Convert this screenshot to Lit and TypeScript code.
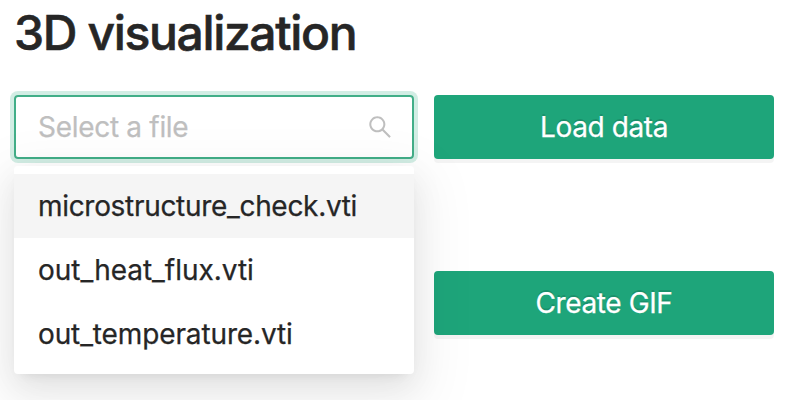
import { LitElement, html, css } from "lit";
import { customElement, state } from "lit/decorators.js";
import { styleMap } from "lit/directives/style-map.js";

interface FileOption {
  name: string;
  tracking: number;
}

@customElement("app-root")
export class AppRoot extends LitElement {
  @state() private files: FileOption[] = [
    { name: "microstructure_check.vti", tracking: -0.31 },
    { name: "out_heat_flux.vti", tracking: -0.02 },
    { name: "out_temperature.vti", tracking: -0.12 },
  ];
  @state() private active = 0;

  static styles = css`
    :host {
      display: block;
      box-sizing: border-box;
      height: 400px;
      padding: 0 14px;
      overflow: hidden;
      background: #fff;
      color: #262626;
      font-family: Inter, "Liberation Sans", sans-serif;
      font-size: 28px;
      line-height: 44px;
      -webkit-text-stroke: 0.25px currentColor;
    }
    * { box-sizing: border-box; }
    h1 {
      margin: 0;
      height: 95px;
      padding-top: 7px;
      font-size: 48px;
      line-height: 52px;
      font-weight: 500;
      letter-spacing: -1.35px;
      white-space: nowrap;
      -webkit-text-stroke-width: 0.6px;
    }
    .grid {
      display: grid;
      grid-template-columns: 400px 340px;
      column-gap: 20px;
      align-items: start;
    }
    .picker { position: relative; }
    .select {
      display: flex;
      align-items: center;
      justify-content: space-between;
      height: 64px;
      padding: 0 20px 0 22px;
      border: 2px solid #42ae88;
      border-radius: 4px;
      box-shadow: 0 0 0 4px rgba(30, 165, 120, 0.2);
    }
    .placeholder { color: #bfbfbf; letter-spacing: -0.3px; -webkit-text-stroke-color: #bfbfbf; }
    .search { display: block; width: 24px; height: 24px; fill: #bfbfbf; }
    .menu {
      position: absolute;
      top: 71px;
      left: 0;
      width: 400px;
      padding: 8px 0;
      border-radius: 4px;
      background: #fff;
      box-shadow: 0 6px 12px -8px rgba(0, 0, 0, 0.12), 0 12px 32px 0 rgba(0, 0, 0, 0.08),
        0 18px 56px 16px rgba(0, 0, 0, 0.05);
    }
    .option { height: 64px; padding: 10px 24px; white-space: nowrap; }
    .option.active { background: #f5f5f5; }
    .actions { display: flex; flex-direction: column; gap: 112px; }
    button {
      height: 64px;
      padding: 0;
      border: 0;
      border-radius: 4px;
      background: #1ea57a;
      color: #fff;
      font: inherit;
      -webkit-text-stroke-color: #fff;
      text-shadow: 0 -2px 0 rgba(0, 0, 0, 0.12);
      box-shadow: 0 4px 0 rgba(0, 0, 0, 0.045);
    }
    .load { letter-spacing: -0.4px; }
    .gif { letter-spacing: -0.4px; }
  `;

  render() {
    return html`
      <h1><span>3D visualization</span></h1>
      <div class="grid">
        <div class="picker">
          <div class="select">
            <span class="placeholder">Select a file</span>
            <svg class="search" viewBox="64 64 896 896" aria-hidden="true">
              <path d="M909.6 854.5L649.9 594.8C690.2 542.7 712 479 712 412c0-80.2-31.3-155.4-87.9-212.1-56.6-56.7-132-87.9-212.1-87.9s-155.5 31.3-212.1 87.9C143.2 256.5 112 331.8 112 412c0 80.1 31.3 155.5 87.9 212.1C256.5 680.8 331.8 712 412 712c67 0 130.6-21.8 182.7-62l259.7 259.6a8.2 8.2 0 0011.6 0l43.6-43.5a8.2 8.2 0 000-11.6zM570.4 570.4C528 612.7 471.8 636 412 636s-116-23.3-158.4-65.6C211.3 528 188 471.8 188 412s23.3-116.1 65.6-158.4C296 211.3 352.2 188 412 188s116.1 23.2 158.4 65.6S636 352.2 636 412s-23.3 116.1-65.6 158.4z"></path>
            </svg>
          </div>
          <div class="menu" role="listbox">
            ${this.files.map(
              (file, i) => html`<div
                class="option ${i === this.active ? "active" : ""}"
                role="option"
                @mouseenter=${() => (this.active = i)}
              ><span style=${styleMap({ letterSpacing: `${file.tracking}px` })}>${file.name}</span></div>`
            )}
          </div>
        </div>
        <div class="actions">
          <button class="load">Load data</button>
          <button class="gif">Create GIF</button>
        </div>
      </div>
    `;
  }
}
